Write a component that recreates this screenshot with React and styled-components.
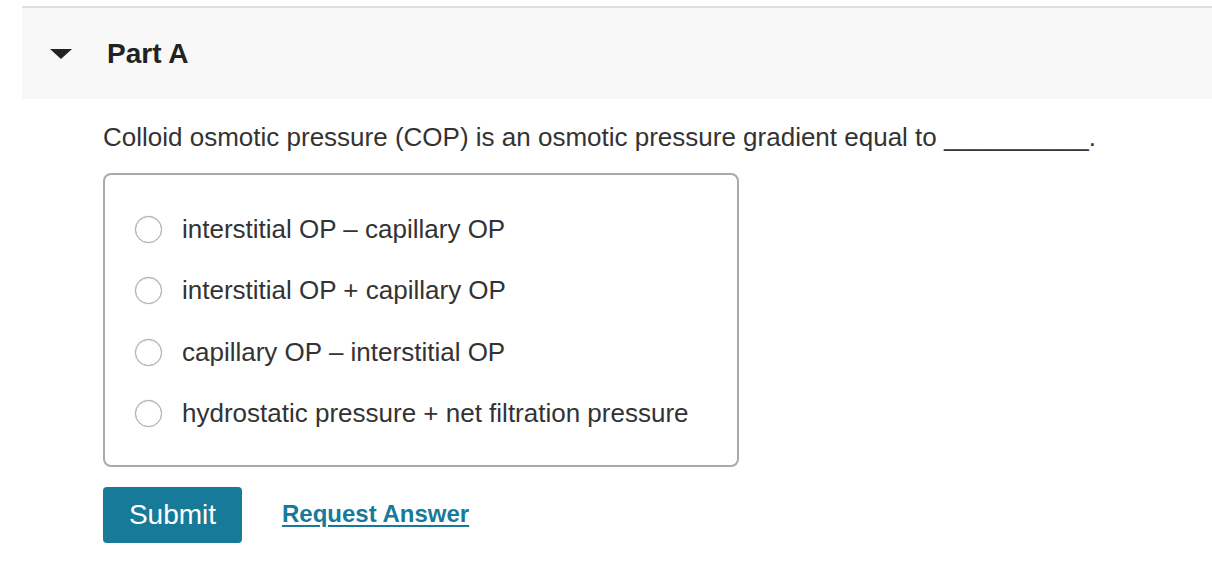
import React from "react";
import styled, { createGlobalStyle } from "styled-components";

const GlobalStyle = createGlobalStyle`
  body {
    margin: 0;
    background: #fff;
    font-family: "Liberation Sans", Arial, sans-serif;
    color: #333;
  }
`;

const Page = styled.div`
  width: 1212px;
  padding-top: 6px;
  padding-left: 22px;
  box-sizing: border-box;
`;

const PartHeader = styled.div`
  border-top: 2px solid #e0e0e0;
  background: #f8f8f8;
  height: 91px;
  display: flex;
  align-items: center;
`;

const Caret = styled.span`
  width: 0;
  height: 0;
  margin-left: 28px;
  margin-right: 35px;
  border-left: 11px solid transparent;
  border-right: 11px solid transparent;
  border-top: 10px solid #222;
`;

const PartTitle = styled.h2`
  margin: 0;
  font-size: 28px;
  font-weight: bold;
  color: #222;
`;

const Body = styled.div`
  padding-left: 81px;
`;

const Question = styled.p`
  margin: 22px 0 0;
  font-size: 26px;
  line-height: 32px;
  color: #333;
`;

const Choices = styled.div`
  margin-top: 20px;
  width: 636px;
  height: 294px;
  box-sizing: border-box;
  border: 2px solid #aaa;
  border-radius: 8px;
  padding: 37px 0 0 30px;
  display: flex;
  flex-direction: column;
  gap: 27px;
`;

const Choice = styled.label`
  display: flex;
  align-items: center;
  height: 34.5px;
  font-size: 26px;
  color: #333;
`;

const Radio = styled.span`
  width: 27px;
  height: 27px;
  box-sizing: border-box;
  border-radius: 50%;
  border: 1px solid #a9a9a9;
  background: #fff;
  box-shadow: 0 0 1px rgba(0, 0, 0, 0.25), inset 0 1px 1px rgba(0, 0, 0, 0.06);
  margin-right: 20px;
`;

const Actions = styled.div`
  margin-top: 20px;
  display: flex;
  align-items: center;
  gap: 40px;
`;

const SubmitButton = styled.button`
  width: 139px;
  height: 56px;
  border: none;
  border-radius: 4px;
  background: #177a99;
  color: #fff;
  font-family: "Liberation Sans", Arial, sans-serif;
  font-size: 28px;
`;

const RequestLink = styled.a`
  margin-bottom: 3px;
  font-size: 24px;
  font-weight: bold;
  color: #177a99;
  text-decoration: underline;
  text-underline-offset: 3px;
`;

const options = [
  "interstitial OP \u2013 capillary OP",
  "interstitial OP + capillary OP",
  "capillary OP \u2013 interstitial OP",
  "hydrostatic pressure + net filtration pressure",
];

export default function App() {
  return (
    <>
      <GlobalStyle />
      <Page>
        <PartHeader>
          <Caret />
          <PartTitle>Part A</PartTitle>
        </PartHeader>
        <Body>
          <Question>
            Colloid osmotic pressure (COP) is an osmotic pressure gradient equal to __________.
          </Question>
          <Choices>
            {options.map((o) => (
              <Choice key={o}>
                <Radio />
                {o}
              </Choice>
            ))}
          </Choices>
          <Actions>
            <SubmitButton>Submit</SubmitButton>
            <RequestLink href="#">Request Answer</RequestLink>
          </Actions>
        </Body>
      </Page>
    </>
  );
}
